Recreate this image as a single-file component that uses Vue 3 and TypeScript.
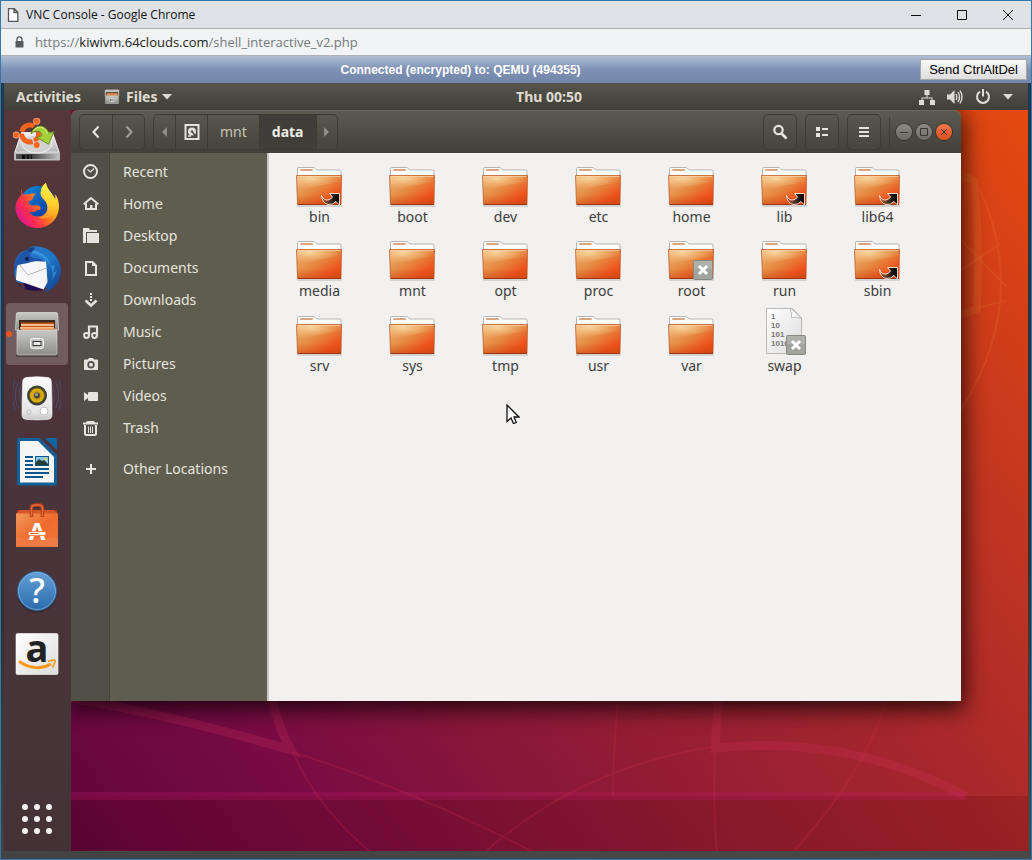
<script setup lang="ts">
interface Place { label: string; icon: string; apart?: boolean }
interface Entry { name: string; kind: 'folder' | 'binary'; emblem?: 'link' | 'locked' }
interface App { name: string; icon: string; active?: boolean }

const apps: App[] = [
  { name: 'Install Ubuntu', icon: 'installer' },
  { name: 'Firefox', icon: 'firefox' },
  { name: 'Thunderbird', icon: 'thunderbird' },
  { name: 'Files', icon: 'cabinet', active: true },
  { name: 'Rhythmbox', icon: 'speaker' },
  { name: 'LibreOffice Writer', icon: 'writer' },
  { name: 'Ubuntu Software', icon: 'software' },
  { name: 'Help', icon: 'help' },
  { name: 'Amazon', icon: 'amazon' },
]

const places: Place[] = [
  { label: 'Recent', icon: 'recent' },
  { label: 'Home', icon: 'home' },
  { label: 'Desktop', icon: 'desktop' },
  { label: 'Documents', icon: 'documents' },
  { label: 'Downloads', icon: 'downloads' },
  { label: 'Music', icon: 'music' },
  { label: 'Pictures', icon: 'pictures' },
  { label: 'Videos', icon: 'videos' },
  { label: 'Trash', icon: 'trash' },
  { label: 'Other Locations', icon: 'plus', apart: true },
]

const folder = (name: string, emblem?: Entry['emblem']): Entry => ({ name, kind: 'folder', emblem })
const entries: Entry[] = [
  folder('bin', 'link'), folder('boot'), folder('dev'), folder('etc'), folder('home'),
  folder('lib', 'link'), folder('lib64', 'link'), folder('media'), folder('mnt'),
  folder('opt'), folder('proc'), folder('root', 'locked'), folder('run'),
  folder('sbin', 'link'), folder('srv'), folder('sys'), folder('tmp'), folder('usr'),
  folder('var'), { name: 'swap', kind: 'binary', emblem: 'locked' },
]
</script>

<template>
  <div class="browser">
    <svg class="sprite" aria-hidden="true">
      <defs>
        <linearGradient id="g-folder" x1="0" y1="0" x2="1" y2="1">
          <stop offset="0" stop-color="#efb678" /><stop offset=".45" stop-color="#e58a42" />
          <stop offset=".78" stop-color="#ee521c" /><stop offset="1" stop-color="#dc4812" />
        </linearGradient>
        <radialGradient id="g-shine" cx=".3" cy=".15" r=".75">
          <stop offset="0" stop-color="#f9dca6" stop-opacity=".9" /><stop offset="1" stop-color="#f5b878" stop-opacity="0" />
        </radialGradient>
        <linearGradient id="g-folder-foot" x1="0" y1="0" x2="0" y2="1">
          <stop offset=".65" stop-color="#c4440f" stop-opacity="0" /><stop offset="1" stop-color="#c4440f" stop-opacity=".4" />
        </linearGradient>
        <linearGradient id="g-link" x1="0" y1="0" x2="1" y2="0">
          <stop offset="0" stop-color="#6b4a3c" stop-opacity=".3" /><stop offset=".6" stop-color="#2a2320" /><stop offset="1" stop-color="#000" />
        </linearGradient>
        <linearGradient id="g-metal" x1="0" y1="0" x2="0" y2="1">
          <stop offset="0" stop-color="#f4f4f4" /><stop offset="1" stop-color="#b4b4b4" />
        </linearGradient>
        <linearGradient id="g-case" x1="0" y1="0" x2="0" y2="1">
          <stop offset="0" stop-color="#fafafa" /><stop offset=".8" stop-color="#e6e6e6" /><stop offset="1" stop-color="#c8c8c8" />
        </linearGradient>
        <linearGradient id="g-drive" x1="0" y1="0" x2="1" y2="0">
          <stop offset="0" stop-color="#555" /><stop offset=".3" stop-color="#333" /><stop offset="1" stop-color="#bbb" />
        </linearGradient>
        <linearGradient id="g-drawer" x1="0" y1="0" x2="0" y2="1">
          <stop offset="0" stop-color="#c9c9c7" /><stop offset="1" stop-color="#8c8c8a" />
        </linearGradient>
        <linearGradient id="g-fox" x1=".95" y1=".15" x2=".1" y2=".75">
          <stop offset="0" stop-color="#fff24a" /><stop offset=".3" stop-color="#ffb61c" />
          <stop offset=".55" stop-color="#ff6a26" /><stop offset=".8" stop-color="#ff2b50" /><stop offset="1" stop-color="#e01c84" />
        </linearGradient>
        <linearGradient id="g-fox-tail" x1=".4" y1="0" x2=".3" y2="1">
          <stop offset="0" stop-color="#fff44f" /><stop offset=".55" stop-color="#ffd02e" /><stop offset="1" stop-color="#ff9322" />
        </linearGradient>
        <linearGradient id="g-globe" x1="0" y1="0" x2="1" y2="1">
          <stop offset="0" stop-color="#1291dd" /><stop offset=".6" stop-color="#0a4fb0" /><stop offset="1" stop-color="#2a2a80" />
        </linearGradient>
        <linearGradient id="g-bird" x1="0" y1="0" x2="1" y2="1">
          <stop offset="0" stop-color="#2c6fc4" /><stop offset=".5" stop-color="#2079c9" /><stop offset="1" stop-color="#123a86" />
        </linearGradient>
        <radialGradient id="g-cone"><stop offset="0" stop-color="#a88300" /><stop offset="1" stop-color="#e9bb16" /></radialGradient>
        <linearGradient id="g-bag" x1="0" y1="0" x2="1" y2="1">
          <stop offset="0" stop-color="#f0985a" /><stop offset=".5" stop-color="#ee6b2d" /><stop offset="1" stop-color="#f0743c" />
        </linearGradient>
        <linearGradient id="g-help" x1="0" y1="0" x2="0" y2="1">
          <stop offset="0" stop-color="#64a0d8" /><stop offset="1" stop-color="#2b6bab" />
        </linearGradient>
        <linearGradient id="g-paper" x1="0" y1="0" x2="1" y2="1">
          <stop offset="0" stop-color="#fff" /><stop offset="1" stop-color="#dcdcdc" />
        </linearGradient>
      </defs>

      <!-- launcher -->
      <symbol id="installer" viewBox="0 0 48 48">
        <path d="M8 14.500h31.500L47 35v6.500q0 1-1 1H2q-1 0-1-1V35z" fill="#bdbdbd" />
        <path d="M8.500 14.500h31L46 34H2z" fill="url(#g-metal)" stroke="#fff" stroke-width=".6" />
        <ellipse cx="24" cy="26" rx="15" ry="9" fill="#d2d2d2" stroke="#efefef" />
        <path d="M3 36h42v5H3z" fill="url(#g-drive)" />
        <path d="M9 37h3v4H9zm5 0h2v4h-2zm4 0h1v4h-1z" fill="#111" />
        <circle cx="17" cy="15.500" r="8.500" fill="none" stroke="#f2631d" stroke-width="5" stroke-dasharray="15.800 2" transform="rotate(72 17 15.500)" />
        <g fill="#f2631d" stroke="#f3e3da" stroke-width=".5"><circle cx="23.700" cy="3.200" r="3.300" /><circle cx="3.200" cy="17" r="3.200" /><circle cx="23.700" cy="27" r="3.300" /></g>
        <path d="M18 16C19.500 8.500 31 3.500 36 15l5-1.500-5.500 12.800L24 19.500l5-2C27 11 21.500 12.500 18 16z" fill="#a5cf3c" stroke="#5d8a13" stroke-width=".9" />
        <path d="M20.500 12.500c4-5 11-5 14 3.500" fill="none" stroke="#dff29a" />
      </symbol>
      <symbol id="firefox" viewBox="0 0 48 48">
        <circle cx="25" cy="22" r="18" fill="url(#g-globe)" />
        <path d="M8.500 6C8 9 8 10.500 8.500 12.500 5 16 2.500 21 2.500 26 3 37.500 12.500 46 24.500 46S45.500 37 46 25c0-6-1.500-9.500-4-13 .5 2.500.5 4 0 5.500C40.500 12 33.500 7.500 33 1c-4 2-6 8-5 12.500 2 4 6.500 6 6.500 12 0 6-4.500 9-9.500 9-4.500 0-7.500-2-9-5 3 1.500 6 .5 8-1 1.500-1 3-.5 3.500-1.500s-.5-3-2.500-3.500c-3-1-5 1-8.500-1-1-1-1-2.500 0-3.500 1.500-1 3-1 3.500-2.500.5-2 1-3.500 3-5-3 0-5.500-.5-7.500 1-2.500-.5-4 0-5 .5C9 11 8.500 8.500 8.500 6z" fill="url(#g-fox)" />
        <path d="M33 1c-4 2-6 8-5 12.500 2 4 6.500 6 6.500 12 0 6-4.500 9-9 10C33 39 43 34 43.500 24c0-3-.5-5-1.500-6.500C40.500 12 33.500 7.500 33 1z" fill="url(#g-fox-tail)" />
      </symbol>
      <symbol id="thunderbird" viewBox="0 0 48 48">
        <path d="M20 .5C33-1 46 8 48 23c.5 12-7 21-18 24 3-2 4-3 4-5L4 36C-2 24 1 6 14 4c1-1.500 3-3 6-3.500z" fill="url(#g-bird)" />
        <path d="M12 5C22 2 34 7 38 20l4-1-2 8 4-2-5 10c2-7 1-14-6-21-6-5-12-7-21-9z" fill="#4ab0ea" opacity=".5" />
        <path d="M2 28l2 8q3 6 9 7l-3-6h16l4 7q-10 2-19-1l-7-7z" fill="#1e0b52" />
        <path d="M4 19l4-6 25 2 1.500 21-4 7.500L3 34z" fill="#f7f7f9" />
        <path d="M5.500 17.500L15 29l18.500-7" fill="none" stroke="#b6b8c2" />
        <path d="M1 26C0 14 7 5 18 3c-3 4-1 8 3 9 4 .5 8 1 12 4-6-1-13-1-18 1L5 19z" fill="#1f55a6" />
        <path d="M14 4q4-4 8-2l-4 5z" fill="#163e80" />
        <circle cx="14" cy="13" r="2" fill="#10204a" />
      </symbol>
      <symbol id="cabinet" viewBox="0 0 48 48">
        <rect x="3" y="44" width="42" height="3" rx="1" fill="#000" opacity=".3" />
        <path d="M5 2.500h38q1.500 0 1.700 1.500L45.500 20h-43L3.300 4q.2-1.500 1.700-1.500z" fill="url(#g-drawer)" stroke="#eee" stroke-width=".6" />
        <path d="M6 10h36v11H6z" fill="#3a2a20" />
        <path d="M8 12.500h33V22H8z" fill="#c5561b" />
        <path d="M8 15h33M7 18h34" stroke="#ffe0b8" stroke-width="1.500" />
        <path d="M8 19.500h34" stroke="#ee8b3c" stroke-width="2" />
        <path d="M4 20h40v23.500q0 1.500-1.500 1.500h-37Q4 45 4 43.500z" fill="url(#g-drawer)" stroke="#d8d8d6" stroke-width=".6" />
        <rect x="17.500" y="28.500" width="13" height="10" rx="2" fill="#c9c9c8" stroke="#f4f4f4" />
        <rect x="20" y="31.500" width="8" height="4" fill="#e8e8e8" stroke="#333" />
      </symbol>
      <symbol id="speaker" viewBox="0 0 48 48">
        <g fill="none" stroke="#465f9b" opacity=".55"><path d="M9 10q-5 10 0 21M5.500 8Q-1 21 5.500 34M2 6q-5 15 0 30M39 10q5 10 0 21M42.500 8Q49 21 42.500 34M46 6q5 15 0 30" /></g>
        <path d="M13 3.500Q24 2 35 3.500q3 .5 3.300 3.500.7 16 .7 34 0 4-5 4.500-10 .8-20 0-5-.5-5-4.500 0-18 .7-34 .3-3 3.300-3.500z" fill="url(#g-case)" stroke="#fff" stroke-width=".6" />
        <circle cx="24" cy="21.500" r="10" fill="#3d3f3a" /><circle cx="24" cy="21.500" r="7.500" fill="url(#g-cone)" stroke="#6e5700" />
        <circle cx="24" cy="21.500" r="3" fill="#4a4a42" /><circle cx="23.500" cy="20.500" r="1.500" fill="#a5a494" />
        <circle cx="31" cy="37" r="4" fill="#fff" stroke="#c2c2c2" /><circle cx="16" cy="38" r="2.200" fill="none" stroke="#c4c4c4" />
      </symbol>
      <symbol id="writer" viewBox="0 0 48 48">
        <path d="M6 0h21l17 17v28.500q0 2-2 2H6q-2 0-2-2V2q0-2 2-2z" fill="#10609b" />
        <path d="M7 3h18l16 16v25.500H7z" fill="#f5f5f5" />
        <path d="M32 0h10q2 0 2 2v10z" fill="#0c65a5" /><path d="M26 0l18 18" stroke="#2a5579" stroke-width="1.500" />
        <g fill="#0b568c"><path d="M12 18h8v2h-8zm0 4h8v2h-8zm0 4h8v2h-8zm0 4h24v2H12zm0 4h24v2H12zm0 4h18v2H12z" /></g>
        <path d="M22 18h14v10H22z" fill="#0b568c" /><path d="M23 19h12v8H23z" fill="#8dc7ed" />
        <path d="M23 27v-3l3-3 3 2 2-1 4 4v1z" fill="#243e38" /><circle cx="33" cy="21" r="1.300" fill="#f5d23e" />
      </symbol>
      <symbol id="software" viewBox="0 0 48 48">
        <path d="M4 8h40v5H4z" fill="#a93412" /><path d="M3 12l4-4h34l4 4z" fill="#d4582a" />
        <path d="M3 11.500h42V45H3z" fill="url(#g-bag)" /><path d="M3 36h42v9H3z" fill="#f58e62" opacity=".35" />
        <path d="M18.500 15V6q0-3 4-3h3q4 0 4 3v9" fill="none" stroke="#b93c17" stroke-width="3.500" />
        <path d="M18.500 14V6q0-3 4-3h3q4 0 4 3v8" fill="none" stroke="#e56a3a" stroke-width="1.500" />
      </symbol>
      <symbol id="help" viewBox="0 0 48 48">
        <circle cx="24" cy="26.500" r="20" fill="#000" opacity=".25" />
        <circle cx="24" cy="25" r="19.500" fill="url(#g-help)" stroke="#2f6296" /><circle cx="24" cy="25" r="18.500" fill="none" stroke="#8dbce8" stroke-opacity=".6" />
      </symbol>
      <symbol id="amazon" viewBox="0 0 48 48">
        <rect x="3" y="3.500" width="42" height="41" rx="1.500" fill="url(#g-paper)" stroke="#fff" stroke-width=".6" />
        <path d="M6 31.500q17 11 32 2.500" fill="none" stroke="#f79a1b" stroke-width="3" />
        <path d="M35 31.500q6.500-2 7-1t-2.500 7" fill="none" stroke="#f79a1b" stroke-width="1.800" />
      </symbol>

      <!-- sidebar -->
      <symbol id="recent" viewBox="0 0 16 16"><circle cx="7.500" cy="7.500" r="6.500" fill="none" stroke="currentColor" stroke-width="2" /><path d="M4.500 5.500l3 2.500 3.500-3.500" fill="none" stroke="currentColor" stroke-width="1.200" /></symbol>
      <symbol id="home" viewBox="0 0 16 16"><path d="M.7 8.300L8 2l7.300 6.300" fill="none" stroke="currentColor" stroke-width="2" /><path d="M3 7.500V13h10V7.500" fill="none" stroke="currentColor" stroke-width="2" /><path d="M7 9h2.500v5H7z" fill="currentColor" /></symbol>
      <symbol id="desktop" viewBox="0 0 16 16"><path d="M0 0h6l1 2h7v2H3v11H0z" fill="currentColor" /><path d="M4 5h12v10H4z" fill="currentColor" /></symbol>
      <symbol id="documents" viewBox="0 0 16 16"><path d="M3 2h6.500L13 5.500V15H3z" fill="none" stroke="currentColor" stroke-width="2" /><path d="M9 1l5 5H9z" fill="currentColor" /></symbol>
      <symbol id="downloads" viewBox="0 0 16 16"><path d="M7 1h2v2H7zm0 3h2v2H7zm0 3h2v2H7z" fill="currentColor" /><path d="M2.500 8.500l5.500 5 5.500-5" fill="none" stroke="currentColor" stroke-width="2.500" /></symbol>
      <symbol id="music" viewBox="0 0 16 16"><path d="M6 11.500V2.500h8v9" fill="none" stroke="currentColor" stroke-width="2.200" /><circle cx="3.500" cy="11.500" r="2.400" fill="none" stroke="currentColor" stroke-width="2" /><circle cx="11.500" cy="11.500" r="2.400" fill="none" stroke="currentColor" stroke-width="2" /></symbol>
      <symbol id="pictures" viewBox="0 0 16 16"><path fill-rule="evenodd" d="M5 3l1-1h4l1 1.500h3q1 0 1 1V13q0 1-1 1H2q-1 0-1-1V4.500q0-1 1-1h3zM8 5a3.700 3.700 0 100 7.400A3.700 3.700 0 008 5z" fill="currentColor" /><circle cx="8" cy="8.700" r="2" fill="currentColor" /></symbol>
      <symbol id="videos" viewBox="0 0 16 16"><rect x="5" y="4" width="10" height="9" rx="1" fill="currentColor" /><path d="M1 4l4 3v3l-4 3z" fill="currentColor" /></symbol>
      <symbol id="trash" viewBox="0 0 16 16"><path d="M0 2.500h3L4 1h7l1 1.500h3v2H0z" fill="currentColor" /><path d="M2 5v9q0 1 1 1h9q1 0 1-1V5" fill="none" stroke="currentColor" stroke-width="2" /><path d="M5.500 6.500V13M7.500 6.500V13M9.500 6.500V13" stroke="currentColor" /></symbol>
      <symbol id="plus" viewBox="0 0 16 16"><path d="M7 3h2v4h4v2H9v4H7V9H3V7h4z" fill="currentColor" /></symbol>

      <!-- files -->
      <symbol id="folder" viewBox="0 0 48 48">
        <path d="M2 47h45" stroke="#000" stroke-opacity=".12" stroke-width="2" />
        <path d="M2.500 18V9.500Q2.500 8.500 3.500 8.500H18q1.500 0 2.500 1l1.500 1.500H45q1 0 1 1v7z" fill="#fdfdfd" stroke="#b5b5b3" />
        <rect x="5" y="10" width="13" height="2" rx="1" fill="#dba57f" />
        <path d="M1.500 16.500h45L46 45.500H2.500z" fill="url(#g-folder)" /><path d="M1.500 16.500h45L46 45.500H2.500z" fill="url(#g-folder-foot)" />
        <path d="M2 17h44v6Q25 26 2 32z" fill="url(#g-shine)" />
        <path d="M1.500 16.500h45L46 45.500H2.500z" fill="none" stroke="#b9501e" stroke-opacity=".7" />
        <path d="M2.500 17.500h43" stroke="#fbd5ae" stroke-opacity=".7" /><path d="M3 45.500h43" stroke="#8d2b08" stroke-opacity=".8" />
      </symbol>
      <symbol id="binary" viewBox="0 0 48 48">
        <path d="M6.500 .5h26L41.500 10v35.500h-35z" fill="url(#g-paper)" stroke="#b9b9b9" />
        <path d="M30 1q2.500 4 1.500 8.500 5-1 9.500 1L32 1z" fill="#fafafa" stroke="#b0b0b0" stroke-width=".8" />
      </symbol>
      <symbol id="link" viewBox="0 0 20 20">
        <path d="M.5 9.500q2 5 6.500 4.500 3-.5 4.500-3L8.500 7.500h10V19L15 15.500Q12 19 7 18.500 1 17 .5 9.500z" fill="url(#g-link)" stroke="#fbeee2" stroke-width=".9" />
      </symbol>
      <symbol id="locked" viewBox="0 0 20 20">
        <rect x=".5" y=".5" width="19" height="19" rx="1" fill="#a1a59d" stroke="#868a81" /><path d="M1 1h18v8H1z" fill="#b4b7af" opacity=".7" />
        <path d="M6 6l8 8M14 6l-8 8" stroke="#fff" stroke-width="3" />
      </symbol>
    </svg>

    <header class="titlebar">
      <svg class="page-icon" viewBox="0 0 12 14"><path d="M1.500.7h5.800l3.500 3.500v9.100H1.500zM7 .8v3.700h3.700" fill="#fff" stroke="#555" stroke-width="1.300" /></svg>
      <h1>VNC Console - Google Chrome</h1>
      <button aria-label="Minimize"><svg viewBox="0 0 12 12"><path d="M1 6.500h10" /></svg></button>
      <button aria-label="Maximize"><svg viewBox="0 0 12 12"><path d="M1.500 1.500h9v9h-9z" /></svg></button>
      <button aria-label="Close"><svg viewBox="0 0 12 12"><path d="M1 1l10 10M11 1L1 11" /></svg></button>
    </header>
    <div class="addressbar">
      <svg class="lock" viewBox="0 0 9 12"><path d="M.5 5h8v6.500h-8z" fill="#555a5f" /><path d="M2 5.500V3.300a2.500 2.500 0 015 0v2.200" fill="none" stroke="#555a5f" stroke-width="1.300" /></svg>
      <p>https://<b>kiwivm.64clouds.com</b>/shell_interactive_v2.php</p>
    </div>
    <div class="vncbar">
      <strong>Connected (encrypted) to: QEMU (494355)</strong>
      <button>Send CtrlAltDel</button>
    </div>

    <div class="remote">
      <div class="panel">
        <div class="panel-left">
          <button>Activities</button>
          <button class="app-menu">
            <svg class="mini" viewBox="0 0 48 48"><use href="#cabinet" /></svg>Files
            <svg class="tri" viewBox="0 0 10 6"><path d="M0 0h10L5 5.500z" /></svg>
          </button>
        </div>
        <time>Thu 00:50</time>
        <button class="panel-right" aria-label="System menu">
          <svg class="tray" viewBox="0 0 16 16"><path d="M5.500 1h5v5h-5zM0 11h5v5H0zm11 0h5v5h-5z" /><path d="M7.500 6h1v2.500h5V11h-1V9.500h-9V11h-1V8.500h5z" /></svg>
          <svg class="tray" viewBox="0 0 16 16"><path d="M0 5.500h3L7.500 1v14L3 10.500H0z" /><path d="M9 5q1.500 3 0 6M11 3q3 5 0 10M13 1.500q4 6.500 0 13" fill="none" stroke="currentColor" stroke-width="1.400" /></svg>
          <svg class="tray" viewBox="0 0 16 16"><path d="M5 2.700a6 6 0 106 0M8 0v7.500" fill="none" stroke="currentColor" stroke-width="2" /></svg>
          <svg class="tri" viewBox="0 0 10 6"><path d="M0 0h10L5 5.500z" /></svg>
        </button>
      </div>

      <div class="workspace">
        <svg class="wallpaper" viewBox="4 110 1024 741" preserveAspectRatio="none" aria-hidden="true">
          <defs>
            <linearGradient id="g-wall" gradientUnits="userSpaceOnUse" x1="71" y1="851" x2="1028" y2="110">
              <stop offset="0" stop-color="#5e053a" /><stop offset=".06" stop-color="#69073f" /><stop offset=".18" stop-color="#780b43" />
              <stop offset=".35" stop-color="#8c1838" /><stop offset=".6" stop-color="#a6262d" /><stop offset=".78" stop-color="#c13521" /><stop offset="1" stop-color="#e5490e" />
            </linearGradient>
          </defs>
          <path d="M4 110h1024v741H4z" fill="url(#g-wall)" />
          <path d="M4 796h1024v55H4z" fill="#400" opacity=".16" />
          <g fill="none" stroke="#d0305a" stroke-opacity=".25" stroke-width="9">
            <path d="M4 690Q120 700 291 750 278 728 270 690M719 690q-2 30-4 58 135-14 250 48" /><path d="M71 796h896" stroke="#c31a6b" stroke-opacity=".26" stroke-width="8" />
          </g>
          <g fill="none" stroke="#d0304a" stroke-opacity=".22" stroke-width="2">
            <path d="M292 752q130 40 280 120M294 755q25 55 80 100M618 701q-5 50-5 95M712 747q-130 20-226 104M715 752q-2 60 2 100M886 701q-20 70-92 150" />
          </g>
          <g fill="none" stroke="#e8772e" stroke-opacity=".24">
            <path d="M955 172l19 9q6 60 3 128l-17 6" stroke-width="8" /><path d="M980 190q50 110-19 220M961 270l40-27M961 240l45 46M980 307l25-6" stroke-width="2" />
          </g>
        </svg>

        <nav class="dock" aria-label="Launcher">
          <button v-for="app in apps" :key="app.icon" :aria-label="app.name" :class="{ active: app.active }">
            <svg viewBox="0 0 48 48">
              <use :href="'#' + app.icon" />
              <template v-if="app.icon === 'software'">
                <text x="24" y="38" class="logo-a">A</text>
                <rect x="15" y="29.500" width="18" height="4" rx="2" fill="#fff" stroke="#ee6b2d" stroke-width=".8" />
                <path d="M17 31.500h9" stroke="#ee6b2d" />
              </template>
              <text v-else-if="app.icon === 'help'" x="24" y="37" class="logo-question">?</text>
              <text v-else-if="app.icon === 'amazon'" x="24" y="32" class="logo-amazon">a</text>
            </svg>
          </button>
          <button class="show-apps" aria-label="Show applications">
            <svg viewBox="0 0 48 48"><template v-for="y in 3" :key="y"><circle v-for="x in 3" :key="x" :cx="x * 12" :cy="y * 12" r="3" fill="#f2f0f0" /></template></svg>
          </button>
        </nav>

        <main class="window">
          <div class="header">
            <div class="group">
              <button class="step" aria-label="Back"><svg viewBox="0 0 16 16"><path d="M10.500 2.500L5.500 8l5 5.500" fill="none" stroke="#eceae4" stroke-width="2" /></svg></button>
              <button class="step" aria-label="Forward"><svg viewBox="0 0 16 16"><path d="M5.500 2.500l5 5.500-5 5.500" fill="none" stroke="#a09f96" stroke-width="2" /></svg></button>
            </div>
            <div class="group">
              <button class="slim" aria-label="Scroll left"><svg viewBox="0 0 16 16"><path d="M10 3v10L5 8z" fill="#8f8e85" /></svg></button>
              <button class="step" aria-label="Disk"><svg viewBox="0 0 16 16"><path d="M1.500 1h13v14h-13z" fill="none" stroke="#e3e1da" stroke-width="2" /><circle cx="8" cy="7.500" r="4" fill="#e3e1da" /><circle cx="8" cy="7.500" r="1.200" fill="#4f4e47" /><path d="M8.500 8l3.500 5" stroke="#4f4e47" stroke-width="1.500" /><path d="M4 12h3" stroke="#e3e1da" stroke-width="1.500" /></svg></button>
              <button class="crumb">mnt</button>
              <button class="crumb current">data</button>
              <button class="slim" aria-label="Scroll right"><svg viewBox="0 0 16 16"><path d="M5 3v10l5-5z" fill="#8f8e85" /></svg></button>
            </div>
            <div class="tools">
              <button aria-label="Search"><svg viewBox="0 0 16 16"><circle cx="6.500" cy="6" r="4.200" fill="none" stroke="#e6e4dd" stroke-width="2.200" /><path d="M9.500 9.500l5 5" stroke="#e6e4dd" stroke-width="2.600" /></svg></button>
              <button aria-label="View as list"><svg viewBox="0 0 16 16"><path d="M2 3h4v4H2zm6 1h6v2H8zM2 9h4v4H2zm6 1h6v2H8z" fill="#e6e4dd" /></svg></button>
              <button aria-label="Menu"><svg viewBox="0 0 16 16"><path d="M3 3h10v2H3zm0 4h10v2H3zm0 4h10v2H3z" fill="#e6e4dd" /></svg></button>
            </div>
            <div class="controls">
              <button aria-label="Minimize window"><svg viewBox="0 0 16 16"><path d="M4 8.500h8" /></svg></button>
              <button aria-label="Maximize window"><svg viewBox="0 0 16 16"><path d="M4.500 4.500h7v7h-7z" /></svg></button>
              <button class="close" aria-label="Close window"><svg viewBox="0 0 16 16"><path d="M5 5l6 6M11 5l-6 6" /></svg></button>
            </div>
          </div>
          <div class="body">
            <nav class="sidebar" aria-label="Places">
              <a v-for="p in places" :key="p.label" href="#" :class="{ apart: p.apart }">
                <svg viewBox="0 0 16 16"><use :href="'#' + p.icon" /></svg>{{ p.label }}
              </a>
            </nav>
            <ul class="files">
              <li v-for="e in entries" :key="e.name">
                <a href="#">
                  <span class="thumb">
                    <svg viewBox="0 0 48 48">
                      <use :href="'#' + e.kind" />
                      <g v-if="e.kind === 'binary'" class="bits"><text x="11" y="11">1</text><text x="11" y="20">10</text><text x="11" y="29">101</text><text x="11" y="38">1010</text></g>
                    </svg>
                    <svg v-if="e.emblem" class="emblem" viewBox="0 0 20 20"><use :href="'#' + e.emblem" /></svg>
                  </span>
                  {{ e.name }}
                </a>
              </li>
            </ul>
          </div>
        </main>
        <svg class="cursor" viewBox="0 0 14 20" aria-hidden="true"><path d="M1 1v16.500l4-3.500 2.500 5.500 2.800-1.200L8 13h5z" fill="#fff" stroke="#111" stroke-width="1.300" /></svg>
      </div>
    </div>
  </div>
</template>

<style>
body { margin: 0; background: #404040; }
</style>

<style scoped>
* { box-sizing: border-box; }
button { margin: 0; padding: 0; border: 0; background: none; color: inherit; font: inherit; display: flex; align-items: center; justify-content: center; }
svg { display: block; flex: none; }
a { color: inherit; text-decoration: none; }
.sprite { position: absolute; width: 0; height: 0; }
.browser { min-height: 100vh; display: flex; flex-direction: column; border: 1px solid #3577ab; font-family: "Noto Sans", "Open Sans", sans-serif; background: #dee1e6; }

.logo-a { fill: #fff; text-anchor: middle; font: 700 24px "Noto Sans", sans-serif; }
.logo-question { fill: #fff; text-anchor: middle; font: 500 35px "Noto Sans", sans-serif; }
.logo-amazon { fill: #222; text-anchor: middle; font: 700 38px "Open Sans", sans-serif; }
.bits text { fill: #777; font: 700 8px "Liberation Sans", sans-serif; }

.titlebar { height: 28px; display: flex; align-items: center; padding-left: 6px; border-bottom: 1px solid #b0b2b5; color: #111; }
.page-icon { width: 12px; height: 14px; margin-right: 7px; }
.titlebar h1 { flex: 1; margin: 0; font: 400 12px/16px "Open Sans", sans-serif; }
.titlebar button { width: 46px; height: 27px; }
.titlebar button svg { width: 12px; height: 12px; fill: none; stroke: #111; stroke-width: 1; }
.addressbar { height: 27px; display: flex; align-items: center; gap: 11px; padding-left: 14px; background: #f1f3f4; border-bottom: 1px solid #b0b2b5; color: #757a7f; }
.lock { width: 9px; height: 12px; }
.addressbar p { margin: 0; font: 13px/18px "Open Sans", sans-serif; }
.addressbar b { font-weight: 400; color: #222; }
.vncbar { height: 27px; display: flex; align-items: center; padding-right: 4px; background: linear-gradient(#b0bed3, #7d91b4 50%, #7387ac); }
.vncbar strong { flex: 1; text-align: center; color: #fff; font: 700 12px/16px "Liberation Sans", Arial, sans-serif; }
.vncbar button { height: 21px; padding: 0 8px; border: 1px solid #a7a7a7; background: linear-gradient(#f8f8f8, #dedede); color: #000; font-size: 13px; font-family: "Liberation Sans", Arial, sans-serif; }

.remote { flex: 1; display: flex; flex-direction: column; padding: 0 3px 8px; background: linear-gradient(175deg, #1d3b52 0, #303030 60%, #484848 98%); }
.panel { height: 27px; display: flex; align-items: center; padding: 0 15px 0 12px; background: linear-gradient(#57554c, #3f3e38); color: #dfdbd2; font-size: 14px; line-height: 20px; font-weight: 700; }
.panel-left { flex: 1 1 69px; display: flex; gap: 23px; }
.panel-right { flex: 1 1 0px; justify-content: flex-end; gap: 12px; }
.app-menu { gap: 5px; }
.mini { width: 16px; height: 16px; margin-right: 1px; }
.panel svg { fill: #dfdbd2; }
.tri { width: 10px; height: 6px; }
.tray { width: 16px; height: 16px; }

.workspace { position: relative; flex: 1; display: flex; align-items: stretch; overflow: hidden; }
.wallpaper { position: absolute; inset: 0; width: 100%; height: 100%; }
.dock { position: relative; z-index: 2; flex: none; width: 67px; padding: 1px 3px 1px 2px; display: flex; flex-direction: column; gap: 2px; background: linear-gradient(#553739, #4a333a 50%, #453539 85%, #433136); }
.dock button { position: relative; width: 62px; height: 62px; border-radius: 4px; }
.dock button svg { width: 48px; height: 48px; }
.dock .active { background: #715c60; }
.dock .active::before { content: ""; position: absolute; left: 0; width: 6px; height: 6px; border-radius: 50%; background: #e95420; }
.dock .show-apps { margin-top: auto; }

.window { position: relative; flex: 1; min-width: 0; margin: 0 67px 150px 0; display: flex; flex-direction: column; border-radius: 7px 7px 0 0; box-shadow: 0 5px 22px 3px rgba(0, 0, 0, .75); }
.header { height: 43px; display: flex; align-items: center; gap: 8px; padding: 0 9px 1px 8px; border-radius: 7px 7px 0 0; background: linear-gradient(#5c5a50, #403f39); border-top: 1px solid #6a685d; color: #c5c3b9; font-size: 14px; line-height: 20px; }
.group { display: flex; height: 36px; border: 1px solid #3b3a34; border-radius: 5px; overflow: hidden; background: linear-gradient(#58564c, #46453e); }
.group button + button { border-left: 1px solid #3b3a34; }
.header svg { width: 16px; height: 16px; }
.step { width: 32px; }
.slim { width: 21px; }
.crumb { padding: 0 12px; }
.crumb.current { background: #3f3e38; color: #f0eee6; font-weight: 700; }
.tools { margin-left: auto; display: flex; gap: 8px; }
.tools button { width: 34px; height: 36px; border: 1px solid #3b3a34; border-radius: 5px; background: linear-gradient(#58564c, #46453e); }
.controls { height: 30px; display: flex; align-items: center; gap: 4px; padding-left: 6px; border-left: 1px solid #3d3c36; }
.controls button { width: 16px; height: 16px; border-radius: 50%; background: linear-gradient(#8d8b82, #6c6a62); box-shadow: 0 0 0 1px #38372f; }
.controls .close { background: linear-gradient(#f4784e, #df4d1d); }
.controls svg { fill: none; stroke: #38372f; stroke-width: 1; }

.body { flex: 1; display: flex; background: #f2f1ef; }
.sidebar { flex: none; width: 198px; padding-top: 3px; border-right: 2px solid #cbc8c3; background: linear-gradient(to right, #505047 38px, #45453c 38px 39px, #5f5d50 39px); color: #e6e4de; font-size: 14px; line-height: 20px; }
.sidebar a { height: 32px; display: flex; align-items: center; gap: 24px; padding-left: 12px; }
.sidebar svg { width: 16px; height: 16px; }
.sidebar .apart { margin-top: 9px; }
.files { flex: 1; margin: 0; padding: 6px 4px; list-style: none; display: grid; grid-template-columns: repeat(auto-fill, 93px); grid-auto-rows: 74px 75px; align-content: start; color: #3d3d3d; font-size: 14px; line-height: 20px; }
.files a { display: flex; flex-direction: column; align-items: center; }
.thumb { position: relative; padding-right: 1px; }
.thumb svg { width: 48px; height: 48px; }
.thumb .emblem { position: absolute; right: 3px; bottom: 1px; width: 20px; height: 20px; }
.cursor { position: absolute; left: 502px; top: 294px; width: 14px; height: 20px; }
</style>
